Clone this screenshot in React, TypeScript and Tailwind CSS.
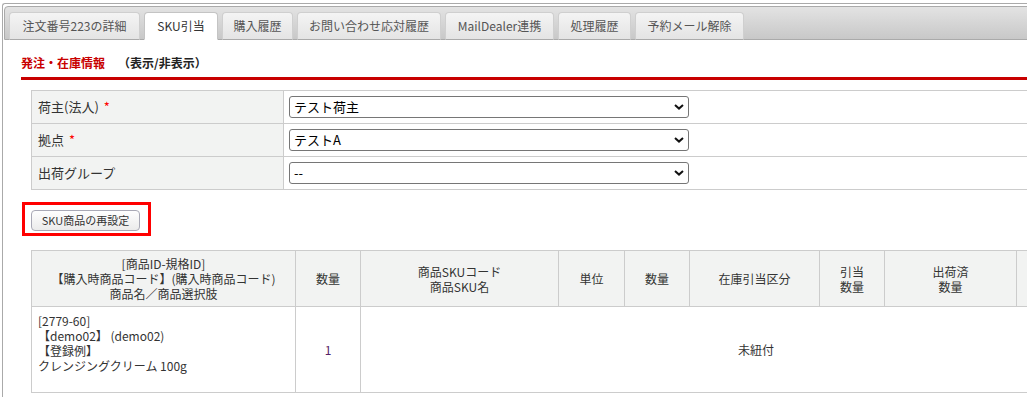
import React from 'react';

const tabs = [
    { label: '注文番号223の詳細', w: 'w-[131px]' },
    { label: 'SKU引当', w: 'w-[74px]', active: true },
    { label: '購入履歴', w: 'w-[71px]' },
    { label: 'お問い合わせ応対履歴', w: 'w-[144px]' },
    { label: 'MailDealer連携', w: 'w-[109px]' },
    { label: '処理履歴', w: 'w-[73px]' },
    { label: '予約メール解除', w: 'w-[109px]' },
];

const formRows = [
    { label: '荷主(法人)', required: true, value: 'テスト荷主' },
    { label: '拠点', required: true, value: 'テストA' },
    { label: '出荷グループ', required: false, value: '--' },
];

function Chevron() {
    return (
        <svg
            className="pointer-events-none absolute right-[5px] top-[8px]"
            width="10"
            height="6"
            viewBox="0 0 10 6"
        >
            <path d="M1 1 L5 4.6 L9 1" fill="none" stroke="#111" strokeWidth="2" />
        </svg>
    );
}

export function App() {
    return (
        <div className="w-[1027px] h-[397px] overflow-hidden bg-white font-['Noto_Sans_CJK_JP',sans-serif] text-[#333]">
            <div className="ml-[2px] mt-[3px] w-[1300px] h-[420px] border-l border-t border-[#aaa] rounded-tl-[3px] pl-[1px] pt-[2px]">
                {/* tab bar */}
                <div className="flex items-start gap-[4px] h-[34px] pl-[4px] pt-[5px] border border-[#aaa] rounded-t-[4px] bg-gradient-to-b from-[#e3e3e3] to-[#c8c8c8]">
                    {tabs.map((tab) => (
                        <div
                            key={tab.label}
                            className={
                                tab.active
                                    ? `${tab.w} h-[28px] flex items-center justify-center rounded-t-[4px] border border-[#c4c4c4] border-b-white bg-white text-[12px] text-[#333]`
                                    : `${tab.w} h-[28px] flex items-center justify-center rounded-t-[4px] border border-[#cfcfcf] border-b-[#aaa] bg-gradient-to-b from-[#f4f4f4] to-[#e4e4e4] text-[12px] text-[#555]`
                            }
                        >
                            {tab.label}
                        </div>
                    ))}
                </div>

                <div className="pl-[17px]">
                    {/* section header */}
                    <div className="pt-[15px] pb-[6px] border-b-[3px] border-[#c80000] text-[12px] leading-[16px] font-bold">
                        <span className="text-[#c80000]">発注・在庫情報</span>
                        <span className="ml-[13px] text-[#222]">（表示/非表示）</span>
                    </div>

                    {/* form */}
                    <table className="mt-[10px] ml-[10px] w-[1250px] border-collapse table-fixed text-[13px]">
                        <colgroup>
                            <col className="w-[252px]" />
                            <col />
                        </colgroup>
                        <tbody>
                            {formRows.map((row) => (
                                <tr key={row.label} className="h-[33px]">
                                    <td className="border border-[#ccc] bg-[#f2f3f2] pl-[6px] align-middle">
                                        {row.label}
                                        {row.required && <span className="ml-[5px] text-[#f00]">*</span>}
                                    </td>
                                    <td className="border border-[#ccc] pl-[5px] align-middle">
                                        <div className="relative w-[400px]">
                                            <select
                                                defaultValue={row.value}
                                                className="block w-[400px] h-[22px] appearance-none rounded-[3px] border border-[#767676] bg-white pl-[4px] text-[13px] text-black"
                                            >
                                                <option value={row.value}>{row.value}</option>
                                            </select>
                                            <Chevron />
                                        </div>
                                    </td>
                                </tr>
                            ))}
                        </tbody>
                    </table>

                    {/* reset button */}
                    <div className="mt-[12px] ml-[1px] inline-flex border-[3px] border-[#f00] pt-[5px] pb-[2px] pl-[6px] pr-[8px]">
                        <button className="w-[109px] h-[21px] rounded-[4px] border border-[#a9a9b6] bg-gradient-to-b from-[#fefefe] to-[#ebebeb] text-[11px] text-[#333]">
                            SKU商品の再設定
                        </button>
                    </div>

                    {/* sku table */}
                    <table className="mt-[14px] ml-[10px] w-[1120px] border-collapse table-fixed text-[12px] leading-[15px]">
                        <colgroup>
                            <col className="w-[264px]" />
                            <col className="w-[65px]" />
                            <col className="w-[198px]" />
                            <col className="w-[66px]" />
                            <col className="w-[65px]" />
                            <col className="w-[130px]" />
                            <col className="w-[65px]" />
                            <col className="w-[132px]" />
                            <col className="w-[135px]" />
                        </colgroup>
                        <thead>
                            <tr className="h-[56px] bg-[#f2f3f2]">
                                <th className="border border-[#ccc] font-normal">
                                    [商品ID-規格ID]
                                    <br />
                                    【購入時商品コード】(購入時商品コード)
                                    <br />
                                    商品名／商品選択肢
                                </th>
                                <th className="border border-[#ccc] font-normal">数量</th>
                                <th className="border border-[#ccc] font-normal">
                                    商品SKUコード
                                    <br />
                                    商品SKU名
                                </th>
                                <th className="border border-[#ccc] font-normal">単位</th>
                                <th className="border border-[#ccc] font-normal">数量</th>
                                <th className="border border-[#ccc] font-normal">在庫引当区分</th>
                                <th className="border border-[#ccc] font-normal">
                                    引当
                                    <br />
                                    数量
                                </th>
                                <th className="border border-[#ccc] font-normal">
                                    出荷済
                                    <br />
                                    数量
                                </th>
                                <th className="border border-[#ccc] font-normal"></th>
                            </tr>
                        </thead>
                        <tbody>
                            <tr className="h-[86px]">
                                <td className="border border-[#ccc] align-top pt-[6px] pl-[6px]">
                                    [2779-60]
                                    <br />
                                    【demo02】 (demo02)
                                    <br />
                                    【登録例】
                                    <br />
                                    クレンジングクリーム 100g
                                </td>
                                <td className="border border-[#ccc] text-center text-[#552266]">1</td>
                                <td colSpan={7} className="border border-[#ccc] text-center">
                                    未紐付
                                </td>
                            </tr>
                        </tbody>
                    </table>
                </div>
            </div>
        </div>
    );
}

export default App;
